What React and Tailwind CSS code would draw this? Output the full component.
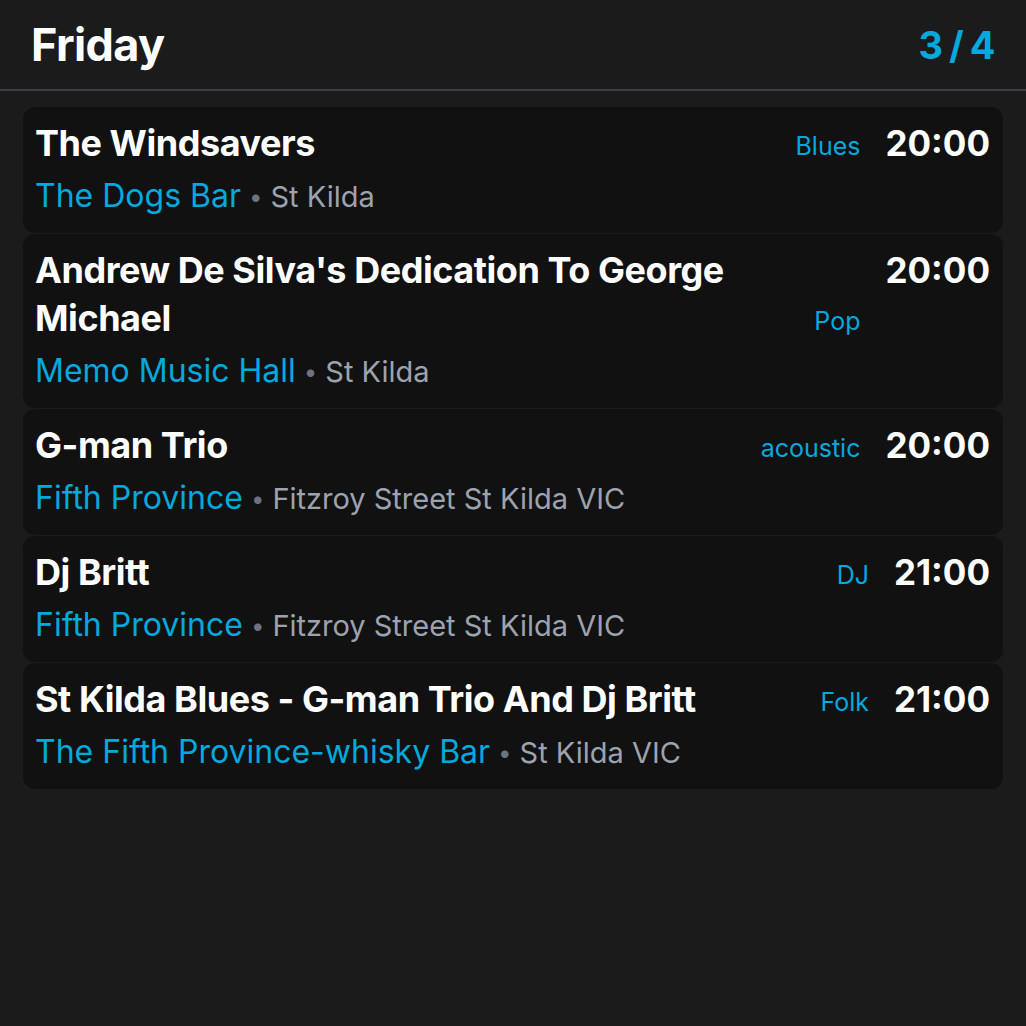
import React from "react";

const events = [
  { title: "The Windsavers", venue: "The Dogs Bar", loc: "St Kilda", genre: "Blues", time: "20:00" },
  { title: "Andrew De Silva's Dedication To George Michael", venue: "Memo Music Hall", loc: "St Kilda", genre: "Pop", time: "20:00" },
  { title: "G-man Trio", venue: "Fifth Province", loc: "Fitzroy Street St Kilda VIC", genre: "acoustic", time: "20:00" },
  { title: "Dj Britt", venue: "Fifth Province", loc: "Fitzroy Street St Kilda VIC", genre: "DJ", time: "21:00" },
  { title: "St Kilda Blues - G-man Trio And Dj Britt", venue: "The Fifth Province-whisky Bar", loc: "St Kilda VIC", genre: "Folk", time: "21:00" },
];

export default function App() {
  return (
    <div
      className="w-[1026px] h-[1026px] bg-[#1b1b1b] text-white overflow-hidden"
      style={{ fontFamily: "Inter, 'Noto Sans', sans-serif" }}
    >
      <div className="h-[91px] flex items-center justify-between pl-[31px] pr-[32px] border-b-2 border-[#3a3f48]">
        <div className="text-[45px] font-bold leading-none tracking-[-0.6px]">Friday</div>
        <div className="text-[38px] font-bold leading-none text-[#02a9de] tracking-[-1.5px]">3 / 4</div>
      </div>
      <div className="px-[23px] pt-[16px] flex flex-col gap-px">
        {events.map((e, i) => (
          <div key={i} className="bg-[#111111] rounded-[12px] pl-[12px] pr-[13px] pt-[12px] pb-[9px]">
            <div className="flex items-start">
              <div className="flex-1 flex items-end">
                <div className="flex-1 text-[36px] font-bold leading-[48px] tracking-[-0.45px]">{e.title}</div>
                <div className="text-[25px] text-[#02a9de] leading-[40px] ml-4 mb-[1px]">{e.genre}</div>
              </div>
              <div className="text-[35px] font-bold leading-[48px] ml-[25px]">{e.time}</div>
            </div>
            <div className="mt-[6px] leading-[46px] whitespace-nowrap">
              <span className="text-[32px] text-[#02a9de]">{e.venue}</span>
              <span className="text-[24px] text-[#6b7280] mx-[8px] relative -top-[2px]">•</span>
              <span className="text-[29px] text-[#9ca3af]">{e.loc}</span>
            </div>
          </div>
        ))}
      </div>
    </div>
  );
}
